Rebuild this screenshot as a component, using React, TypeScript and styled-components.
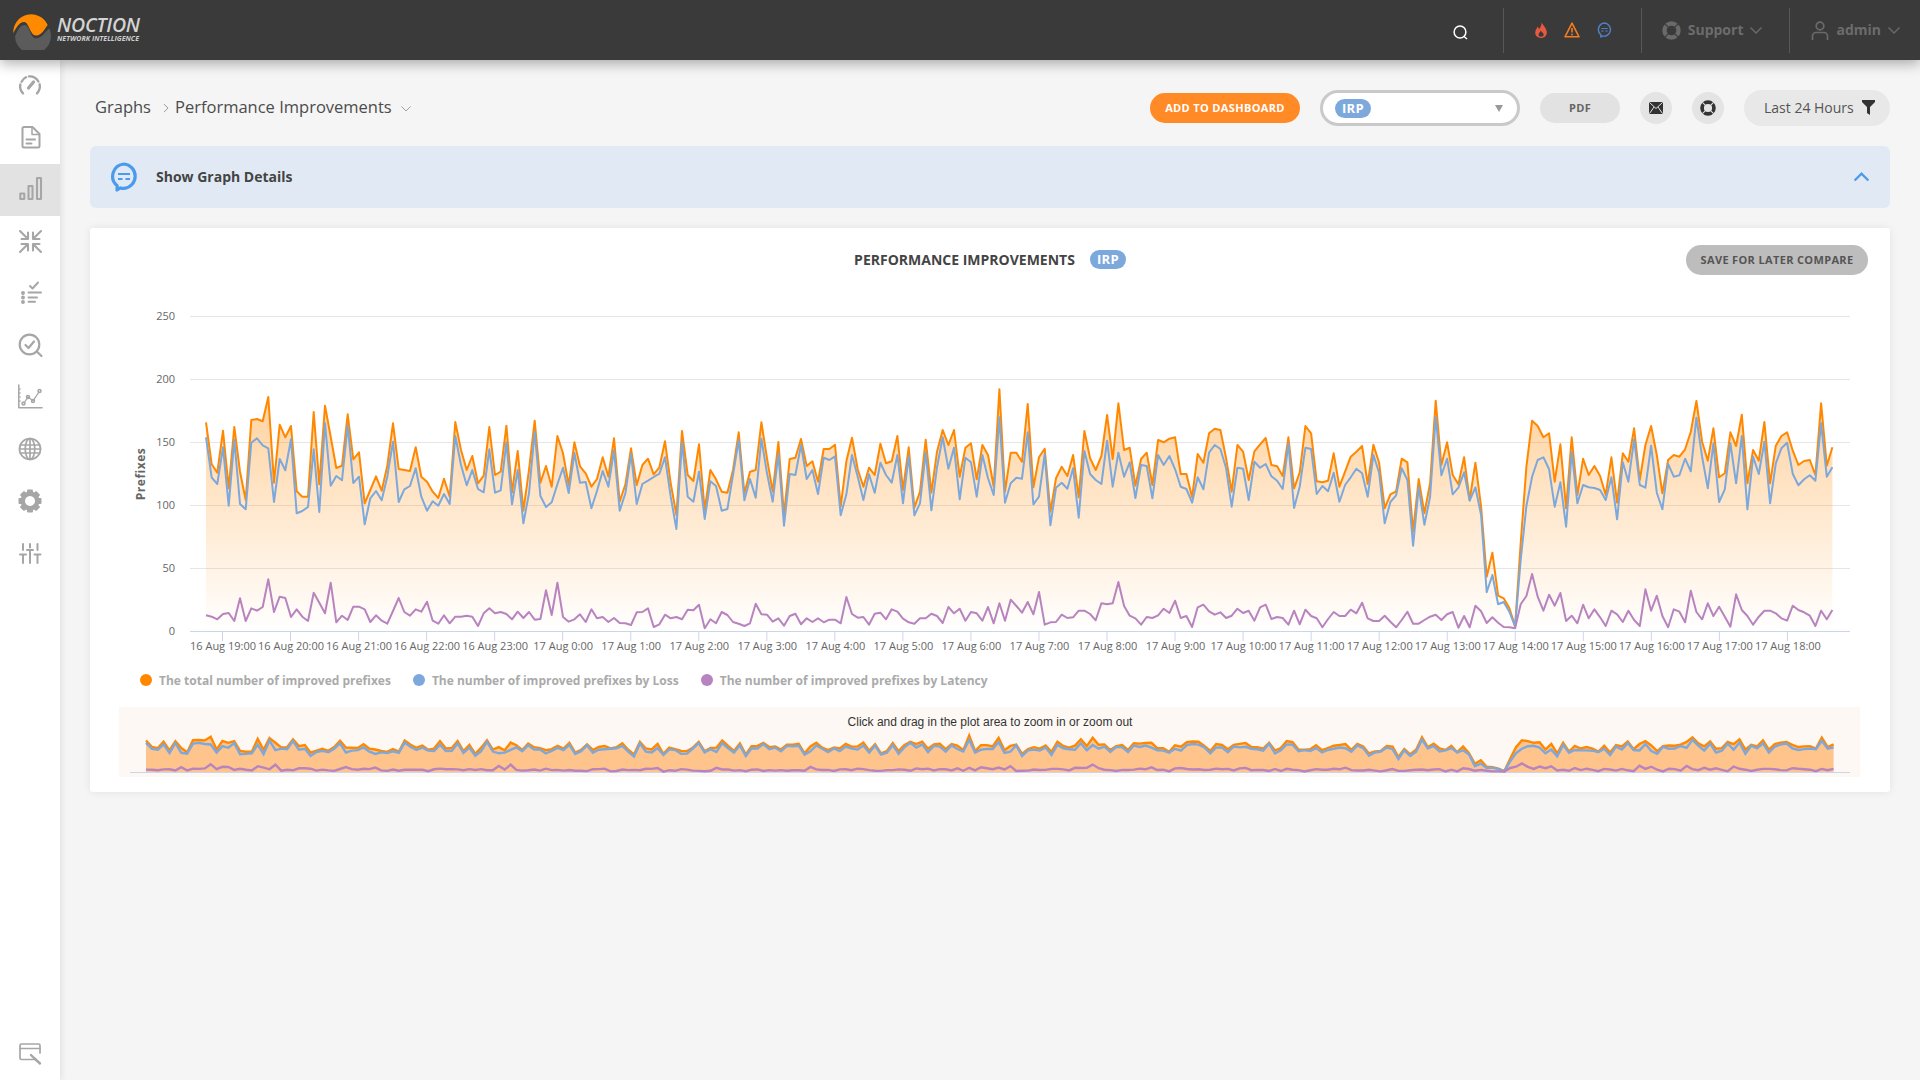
import React, { useMemo } from "react";
import styled, { createGlobalStyle } from "styled-components";

const Global = createGlobalStyle`
  html, body { margin: 0; padding: 0; height: 100%; background: #f5f5f5; }
  body { font-family: "Open Sans", "Liberation Sans", sans-serif; overflow: hidden; }
  #root { height: 100%; }
  * { box-sizing: border-box; }
`;

const Page = styled.div`
  width: 1920px; height: 1080px; display: flex; flex-direction: column; overflow: hidden;
`;
const TopBar = styled.header`
  height: 60px; flex: none; background: #3a3a3a; display: flex; align-items: center;
  box-shadow: 0 4px 12px rgba(0,0,0,.3); position: relative; z-index: 3; padding-left: 12px;
`;
const LogoWrap = styled.div`display: flex; align-items: center; gap: 5px;`;
const LogoText = styled.div`display: flex; flex-direction: column; margin-top: -3px;`;
const LogoName = styled.span`
  font: italic 600 19.5px/20px "Open Sans", sans-serif; color: #d4d4d4; letter-spacing: -.2px;
`;
const LogoTag = styled.span`
  font: italic 700 7px/7px "Open Sans", sans-serif; color: #cfcfcf; letter-spacing: .05px;
`;
const TopRight = styled.div`margin-left: auto; display: flex; align-items: center; height: 45px;`;
const TopSection = styled.div<{ $pl: number; $pr: number; $gap: number; $divider?: boolean }>`
  height: 100%; display: flex; align-items: center;
  padding: 0 ${p => p.$pr}px 0 ${p => p.$pl}px; gap: ${p => p.$gap}px;
  border-left: ${p => (p.$divider ? "1px solid #585858" : "none")};
`;
const TopLabel = styled.span`
  font-weight: 700; font-size: 14px; color: #6c6c6c; line-height: 1;
`;
const Body = styled.div`flex: 1; display: flex; min-height: 0;`;
const Sidebar = styled.nav`
  width: 60px; flex: none; background: #fff; display: flex; flex-direction: column;
  box-shadow: 2px 0 6px rgba(0,0,0,.08); position: relative; z-index: 2; padding-bottom: 1px;
`;
const SideItem = styled.div<{ $active?: boolean; $bottom?: boolean }>`
  height: 52px; flex: none; display: flex; align-items: center; justify-content: center;
  background: ${p => (p.$active ? "#e2e2e2" : "transparent")};
  margin-top: ${p => (p.$bottom ? "auto" : "0")};
`;
const Main = styled.main`flex: 1; padding: 30px 30px 0; display: flex; flex-direction: column; min-width: 0;`;
const ToolRow = styled.div`display: flex; align-items: center; height: 36px; padding-left: 5px; gap: 20px;`;
const Crumbs = styled.div`display: flex; align-items: center; margin-right: auto; margin-top: -2px;`;
const Crumb = styled.span`font-size: 16.5px; color: #4c4c4c; line-height: 1;`;
const CrumbSep = styled.span`display: flex; margin: 2px 6px 0 12px;`;
const CrumbMenu = styled.span`display: flex; margin: 3px 0 0 9px;`;
const Pill = styled.button<{ $bg: string; $fg: string; $w: number; $h?: number }>`
  width: ${p => p.$w}px; height: ${p => p.$h ?? 30}px; border: 0; border-radius: 15px; padding: 0 0 2px;
  background: ${p => p.$bg}; color: ${p => p.$fg}; font: 700 11px "Open Sans", sans-serif;
  letter-spacing: .35px; display: flex; align-items: center; justify-content: center;
`;
const SelectBox = styled.div`
  width: 200px; height: 36px; border: 3px solid #c9c9c9; border-radius: 18px; background: #fff;
  display: flex; align-items: center; padding: 0 14px 0 12px;
`;
const Badge = styled.span`
  display: inline-flex; align-items: center; justify-content: center; width: 36px; height: 19px; padding-bottom: 1px;
  border-radius: 10px; background: #7ca8dc; color: #fff; font: 700 13px "Open Sans", sans-serif; letter-spacing: .3px;
`;
const Caret = styled.span`
  margin-left: auto; width: 0; height: 0; border-left: 4.5px solid transparent; border-right: 4.5px solid transparent;
  border-top: 7px solid #999;
`;
const RoundBtn = styled.div`
  width: 32px; height: 32px; border-radius: 50%; background: #e4e4e4; display: flex; align-items: center; justify-content: center;
`;
const RangeBtn = styled.div`
  width: 146px; height: 36px; border-radius: 18px; background: #e8e8e8; display: flex; align-items: center;
  padding: 0 0 2px 20px; gap: 8px; font-size: 14px; color: #555;
`;
const DetailsBar = styled.div`
  height: 62px; margin-top: 20px; background: #e1eaf4; border-radius: 6px; display: flex; align-items: center; padding: 0 21px 0 20px;
`;
const DetailsText = styled.span`font-weight: 700; font-size: 14px; color: #444; margin: -2px 0 0 18px;`;
const DetailsChevron = styled.span`margin-left: auto; display: flex;`;
const Card = styled.section`
  margin-top: 20px; height: 564px; background: #fff; border-radius: 3px; box-shadow: 0 0 8px rgba(0,0,0,.08);
  display: flex; flex-direction: column; padding-top: 17px;
`;
const CardHead = styled.div`
  height: 30px; display: grid; grid-template-columns: 1fr auto 1fr; align-items: center; padding: 0 22px;
`;
const CardTitle = styled.div`
  grid-column: 2; display: flex; align-items: center; gap: 15px; font-weight: 700; font-size: 14px; color: #444;
  line-height: 19px; margin-top: -1px;
`;
const TitleText = styled.span`margin-top: -1px;`;
const CardSave = styled.div`grid-column: 3; justify-self: end;`;
const ChartSvg = styled.svg`display: block; width: 1800px; height: 360px; margin-top: 25px; flex: none;`;
const AxisText = styled.text`font: 400 11px "Open Sans", sans-serif; fill: #666;`;
const YTitle = styled.text`font: 700 12px "Open Sans", sans-serif; fill: #666; letter-spacing: .5px;`;
const Legend = styled.div`display: flex; align-items: center; height: 26px; margin-top: 7px; margin-bottom: 1px; padding-left: 50px; gap: 22px;`;
const LegendItem = styled.div`
  display: flex; align-items: center; gap: 7px; font-weight: 700; font-size: 12px; color: #aaa;
`;
const LegendDot = styled.span<{ $c: string }>`width: 12px; height: 12px; border-radius: 50%; background: ${p => p.$c};`;
const NavSvg = styled.svg`display: block; width: 1741px; height: 70px; margin: 13px 0 0 29px; flex: none; background: #fdf8f4;`;
const NavText = styled.text`font: 400 12px "Liberation Sans", Arial, sans-serif; fill: #333;`;

/* Chart data: pixel readings of each series, in segments [origin, orange, blue, purple]; y = origin + d / 3 */
const SEGMENTS: [number, number[], number[], number[]][] = [
  [300,
    [367,493,518,392,565,381,515,600,360,357,364,291,548,374,412,378,574,590,590,336,553,317,410,504,497,343,478,457,610,570,529,572,497,370,507,510,513,442,530,545,575,594,536,590,366,450,510,468,550,527,381,525,515,377,578,453,632,510,362,548,498,560,408,460,556,427,499,520,560,537,472,530,415,605,553],
    [412,533,552,442,617,420,612,628,428,415,436,445,606,477,511,418,640,633,621,448,636,369,557,528,541,376,549,530,673,595,573,601,530,425,606,568,558,505,590,632,604,617,582,612,408,495,556,510,567,577,448,578,571,427,613,510,670,580,395,588,621,607,553,503,579,459,548,546,625,573,513,560,451,632,580],
    [946,950,958,942,939,963,895,963,925,932,921,838,936,890,894,951,928,950,963,878,908,940,848,967,947,960,920,920,928,966,946,962,971,933,894,936,947,928,935,905,962,971,946,970,950,950,947,950,978,940,925,940,936,942,958,935,954,936,959,957,871,945,848,951,965,958,943,966,928,955,951,966,954,969,970]],
  [380,
    [205,315,255,236,283,262,184,310,405,153,285,303,193,390,270,298,335,338,270,157,340,275,270,127,235,335,186,405,237,233,177,258,244,305,207,207,194,380,243,173,268,320,263,285,191,250,244,168,330,202,383,335,179,338,215,150,195,150,290],
    [222,372,312,302,291,281,232,350,447,185,350,365,275,417,304,318,392,387,285,180,361,297,353,176,280,365,222,437,282,285,195,297,270,342,233,240,229,406,343,225,290,360,283,338,248,285,308,225,370,228,406,370,217,391,262,172,266,203,358],
    [735,697,696,685,741,733,704,715,711,718,689,691,674,745,718,730,696,705,726,731,738,730,671,703,704,725,715,737,708,701,733,715,726,715,727,719,719,730,651,702,713,711,734,701,698,718,688,695,716,727,731,715,715,701,708,729,681,700,686]],
  [380,
    [203,190,298,195,225,320,28,335,218,218,245,72,322,232,206,395,295,260,288,225,352,153,235,270,228,105,237,70,210,203,317,237,218,315,180,187,176,172,282,282,352,222,248,160,146,150,235,335,195,215,300,214,193,174,255,259,288,172,325,278],
    [233,247,350,225,295,345,112,368,310,293,296,157,373,350,222,436,323,308,326,265,413,213,282,300,312,182,320,218,290,247,354,255,258,355,225,255,228,268,320,327,368,292,328,218,195,207,265,380,263,266,360,245,263,252,289,302,327,190,384,320],
    [722,696,700,722,681,730,670,722,659,678,698,666,703,636,734,727,726,704,714,712,692,692,702,721,670,673,670,606,678,707,715,734,711,714,706,686,699,662,714,708,741,682,674,694,704,697,714,707,686,699,692,722,682,674,717,711,714,734,692,733]],
  [400,
    [78,100,244,247,242,160,260,215,170,155,138,252,134,188,325,283,274,176,187,395,237,340,250,2,195,127,225,253,172,300,188,320,530,458,587,595,625,678,430,200,62,78,112,100,245,133,325,112,285,176,225,198,228,285,172,308,160,185,85,240,135,78,165,280,180,165,170,148,95,3,125,182,85,232,220,97,138,44,250,150,182,66,250,137,108,97,152,195,183,180,225,10,197,142],
    [143,147,282,258,274,218,305,255,232,206,220,290,165,218,370,306,286,205,240,437,262,374,290,50,226,176,283,263,217,302,262,345,577,525,613,606,635,680,480,318,230,180,172,208,320,247,380,156,310,255,262,264,270,300,232,358,187,245,118,255,263,137,278,328,192,230,226,176,214,53,170,265,130,306,268,130,250,108,328,170,222,125,310,190,145,128,222,256,238,226,242,70,230,202],
    [629,648,655,682,657,636,648,648,629,640,608,655,663,663,647,665,682,660,635,671,671,660,650,644,660,643,636,683,648,682,617,634,669,652,668,681,682,685,613,588,522,590,632,584,617,579,663,647,670,614,655,628,652,678,632,643,666,632,660,678,568,632,587,648,682,628,635,667,572,636,658,610,648,620,650,680,583,630,648,674,650,632,632,640,655,662,617,630,637,647,678,632,658,630]],
];

function buildSeries(idx: 1 | 2 | 3): number[] {
  const out: number[] = [];
  SEGMENTS.forEach(seg => seg[idx].forEach(d => out.push(seg[0] + d / 3)));
  return out;
}

const X0 = 206;
const DX = 5.667;
const BASE = 631;
const NAV_X0 = 146;
const NAV_DX = 5.88;
const NAV_BASE = 772;
const NAV_K = 0.19 / 1.26;
const GRID = [[250, 316], [200, 379], [150, 442], [100, 505], [50, 568], [0, 631]];
const HOURS = [19,20,21,22,23,0,1,2,3,4,5,6,7,8,9,10,11,12,13,14,15,16,17,18];

const mainPts = (ys: number[]) => ys.map((y, i) => `${(X0 + DX * i).toFixed(1)},${y.toFixed(1)}`).join(" ");
const navPts = (ys: number[]) =>
  ys.map((y, i) => `${(NAV_X0 + NAV_DX * i).toFixed(1)},${(NAV_BASE - (BASE - y) * NAV_K).toFixed(1)}`).join(" ");

const ORANGE = "#ff8800";
const BLUE = "#7ca8dc";
const PURPLE = "#b884bf";
const SIDE = "#a6a6a6";

const Chart: React.FC = () => {
  const s = useMemo(() => ({ o: buildSeries(1), b: buildSeries(2), p: buildSeries(3) }), []);
  const end = X0 + DX * (s.o.length - 1);
  return (
    <ChartSvg viewBox="90 300 1800 360">
      <defs>
        <linearGradient id="areaFill" gradientUnits="userSpaceOnUse" x1="0" y1="389" x2="0" y2="631">
          <stop offset="0" stopColor={ORANGE} stopOpacity=".39" />
          <stop offset="1" stopColor={ORANGE} stopOpacity="0" />
        </linearGradient>
      </defs>
      {GRID.slice(0, 5).map(([v, y]) => <line key={v} x1="190" x2="1850" y1={y + .5} y2={y + .5} stroke="#e6e6e6" />)}
      <line x1="190" x2="1850" y1="631.5" y2="631.5" stroke="#ccd6eb" />
      {HOURS.map((h, i) => {
        const x = 222.5 + 68.04 * i;
        return (
          <g key={i}>
            <line x1={x} x2={x} y1="631" y2="641" stroke="#ccd6eb" />
            <AxisText x={x + .5} y="650" textAnchor="middle">{`${i < 5 ? 16 : 17} Aug ${h}:00`}</AxisText>
          </g>
        );
      })}
      {GRID.map(([v, y]) => <AxisText key={v} x="175" y={y + 4} textAnchor="end">{v}</AxisText>)}
      <YTitle x="145" y="474" textAnchor="middle" transform="rotate(-90 145 474)">Prefixes</YTitle>
      <polygon points={`${X0},${BASE} ${mainPts(s.o)} ${end},${BASE}`} fill="url(#areaFill)" />
      <polyline points={mainPts(s.o)} fill="none" stroke={ORANGE} strokeWidth="2" strokeLinejoin="round" />
      <polyline points={mainPts(s.b)} fill="none" stroke={BLUE} strokeWidth="2" strokeLinejoin="round" />
      <polyline points={mainPts(s.p)} fill="none" stroke={PURPLE} strokeWidth="2" strokeLinejoin="round" />
    </ChartSvg>
  );
};

const Navigator: React.FC = () => {
  const s = useMemo(() => ({ o: buildSeries(1), b: buildSeries(2), p: buildSeries(3) }), []);
  const end = NAV_X0 + NAV_DX * (s.o.length - 1);
  return (
    <NavSvg viewBox="119 707 1741 70">
      <line x1="130" x2="1850" y1="772.5" y2="772.5" stroke="#ccd6eb" />
      <polygon points={`${NAV_X0},${NAV_BASE} ${navPts(s.o)} ${end},${NAV_BASE}`} fill="#fec48c" />
      <polyline points={navPts(s.o)} fill="none" stroke={ORANGE} strokeWidth="2.4" />
      <polyline points={navPts(s.b)} fill="none" stroke={BLUE} strokeWidth="2.4" />
      <polyline points={navPts(s.p)} fill="none" stroke={PURPLE} strokeWidth="2.4" />
      <NavText x="990" y="726" textAnchor="middle">Click and drag in the plot area to zoom in or zoom out</NavText>
    </NavSvg>
  );
};

const Ico: React.FC<{ children: React.ReactNode; dy?: number; sw?: number }> = ({ children, dy = 0, sw = 2 }) => (
  <svg width={24} height={24} viewBox={`0 ${-dy} 24 24`} fill="none" stroke={SIDE} strokeWidth={sw} strokeLinecap="round" strokeLinejoin="round" style={{ overflow: "visible" }}>
    {children}
  </svg>
);

const Logo = () => (
  <svg width="40" height="40" viewBox="0 0 40 40">
    <path d="M3 26.700 C6 20 8 15 12.500 15 C18 15 18 28.300 24 28.300 C30 28.300 33 22 37.300 18.300 A18 18 0 1 1 3 26.700Z" fill="#5b5b5b" />
    <path d="M1.300 23.300 A18 18 0 0 1 35.700 15 C33 18 30 25.500 24 25.500 C18 25.500 17 12 12.200 12 C7 12 4 18 1.300 23.300Z" fill="#ff8a00" />
  </svg>
);

const SIDE_ICONS: React.ReactNode[] = [
  <Ico key="g" sw={2.400} dy={1.500}><path d="M5 17.800 A10 10 0 0 1 2.300 9" /><path d="M3.600 6.200 A10 10 0 0 1 8 1.800" /><path d="M11 .9 A10 10 0 0 1 20.400 6" /><path d="M21.600 8.800 A10 10 0 0 1 19 17.800" /><path d="M10.500 12.500 L15.500 6.500" strokeWidth="3.200" /></Ico>,
  <Ico key="f"><path d="M6 1 H14.500 L21.500 8 V20 A1.500 1.500 0 0 1 20 21.500 H6 A1.500 1.500 0 0 1 4.500 20 V2.500 A1.500 1.500 0 0 1 6 1Z" /><path d="M14 1.500 V8.500 H21" strokeWidth="1.500" /><path d="M8.500 13.500 H17" /><path d="M8.500 17.500 H13.500" /></Ico>,
  <Ico key="b" sw={2.100}><rect x="2.300" y="15.500" width="4" height="5.500" rx=".3" /><rect x="10.500" y="8" width="4" height="13" rx=".3" /><rect x="19" y="0" width="4" height="21" rx=".3" /></Ico>,
  <Ico key="c" sw={2.100} dy={-1}><path d="M2 2 L10 10 M10 3.500 V10 H3.500" /><path d="M23 2 L15 10 M15 3.500 V10 H21.500" /><path d="M2 23 L10 15 M10 21.500 V15 H3.500" /><path d="M23 23 L15 15 M15 21.500 V15 H21.500" /></Ico>,
  <Ico key="l" sw={1.900} dy={-1}><path d="M12 5 L14.500 7.500 L20 1.500" /><path d="M10.500 11.500 H23" /><path d="M10.500 16.500 H19" /><path d="M10.500 20.700 H17" /><circle cx="5" cy="12" r="1" fill={SIDE} /><circle cx="5" cy="16.500" r="1" fill={SIDE} /><circle cx="5" cy="21" r="1" fill={SIDE} /></Ico>,
  <Ico key="s" sw={2.200} dy={-.5}><circle cx="11.500" cy="11" r="9.800" /><path d="M18.800 18 L23.500 22.500" /><path d="M7.500 11.500 L10.500 14.500 L16 8" /></Ico>,
  <Ico key="t" sw={1.500} dy={-1}><path d="M.8 0 V22.800 H24" /><path d="M.8 4 H2.500 M.8 8 H2.500 M.8 12 H2.500 M.8 16 H2.500" strokeWidth="1" /><path d="M6 18 L10 12 L15 15.800 L21 7" strokeWidth="1.300" /><circle cx="5.500" cy="18.500" r="1.500" /><circle cx="10" cy="12" r="1.500" /><circle cx="15" cy="16" r="1.500" /><circle cx="21.500" cy="6" r="1.500" /></Ico>,
  <Ico key="w" sw={1.700} dy={-1}><circle cx="12" cy="12" r="10.500" /><ellipse cx="12" cy="12" rx="4.800" ry="10.500" /><path d="M12 1.500 V22.500 M2.200 8 H21.800 M2.200 16 H21.800 M1.500 12 H22.500" /></Ico>,
  <Ico key="e" sw={0} dy={-1}>
    <g fill={SIDE} stroke="none">
      {[0, 45, 90, 135, 180, 225, 270, 315].map(a => <rect key={a} x="9" y=".5" width="6" height="5" rx="1" transform={`rotate(${a} 12 12)`} />)}
      <path fillRule="evenodd" d="M12 2.500 A9.500 9.500 0 1 1 11.990 2.500Z M12 7 A5 5 0 1 0 12.010 7Z" />
    </g>
  </Ico>,
  <Ico key="v" dy={-2}><path d="M5 4 V10 M2 14.500 H8 M5 14.500 V23" /><path d="M12 4 V7.500 M9 10 H15 M12 10 V23" /><path d="M19.500 4 V10 M16.500 14.500 H22.500 M19.500 14.500 V23" /></Ico>,
];

const FireIcon = () => (
  <svg width="12" height="16" viewBox="0 0 12 16"><path fill="#e8593f" fillRule="evenodd" d="M6.500 0 C7.500 3 11.800 6 11.800 10.500 C11.800 13.800 9.200 16 6 16 C2.700 16 .2 13.800 .2 10.800 C.2 8 1.900 6.500 2.700 4.500 C3.500 5.500 3.800 6.500 3.900 7.200 C5.500 5.500 7 3 6.500 0Z M5.800 8.500 C5.500 10 3.500 11 3.500 12.800 C3.500 14 4.600 14.800 6 14.800 C7.600 14.800 8.700 14 8.700 12.600 C8.700 11 6.500 10.200 5.800 8.500Z" /></svg>
);
const WarnIcon = () => (
  <svg width="16" height="16" viewBox="0 0 16 16" fill="none"><path d="M8 1.200 L15 14.800 H1 Z" stroke="#f47b20" strokeWidth="1.600" strokeLinejoin="round" /><path d="M8 6 V10.500" stroke="#f47b20" strokeWidth="1.600" /><circle cx="8" cy="12.500" r=".9" fill="#f47b20" /></svg>
);
const ChatBubble: React.FC<{ size: number; c: string; sw: number }> = ({ size, c, sw }) => (
  <svg width={size} height={size * 1.07} viewBox="0 0 28 30" fill="none">
    <path d="M14 2 A12.300 12.300 0 0 1 14 26.500 C12.500 26.500 11.500 26.300 10.500 26 L7 28 L7.200 23.800 A12.300 12.300 0 0 1 14 2Z" stroke={c} strokeWidth={sw} strokeLinejoin="round" />
    <path d="M8 12 H20 M8 17 H12.500 M15.500 17 H20" stroke={c} strokeWidth={sw * .68} />
  </svg>
);
const LifeRing: React.FC<{ size: number; c: string; gap: string }> = ({ size, c, gap }) => (
  <svg width={size} height={size} viewBox="0 0 20 20">
    <circle cx="10" cy="10" r="7.400" fill="none" stroke={c} strokeWidth="4.600" />
    <path d="M3 3 L6.500 6.500 M17 3 L13.500 6.500 M3 17 L6.500 13.500 M17 17 L13.500 13.500" stroke={gap} strokeWidth="1.300" />
  </svg>
);
const Chevron: React.FC<{ w: number; c: string; up?: boolean; right?: boolean; sw?: number }> = ({ w, c, up, right, sw = 1.400 }) => (
  <svg width={w} height={right ? w * 1.7 : w * .55} viewBox={right ? "0 0 6 10" : "0 0 12 6.600"} fill="none" style={{ overflow: "visible" }}>
    <path d={right ? "M1 1 L5 5 L1 9" : up ? "M.5 6 L6 .5 L11.500 6" : "M.5 .5 L6 6 L11.500 .5"} stroke={c} strokeWidth={sw} />
  </svg>
);

export default function App() {
  return (
    <Page>
      <Global />
      <TopBar>
        <LogoWrap>
          <Logo />
          <LogoText>
            <LogoName>NOCTION</LogoName>
            <LogoTag>NETWORK INTELLIGENCE</LogoTag>
          </LogoText>
        </LogoWrap>
        <TopRight>
          <TopSection $pl={0} $pr={35} $gap={0}>
            <svg width="15" height="15" viewBox="0 0 15 15" fill="none" style={{ marginTop: 4 }}><circle cx="7" cy="7" r="5.900" stroke="#fff" strokeWidth="1.500" /><path d="M11 11.500 L14 14" stroke="#fff" strokeWidth="1.500" /></svg>
          </TopSection>
          <TopSection $divider $pl={31} $pr={29} $gap={17}>
            <FireIcon />
            <WarnIcon />
            <ChatBubble size={15} c="#4f7fc4" sw={2.800} />
          </TopSection>
          <TopSection $divider $pl={20} $pr={27} $gap={7}>
            <LifeRing size={19} c="#6a6a6a" gap="#3a3a3a" />
            <TopLabel>Support</TopLabel>
            <Chevron w={12} c="#6a6a6a" />
          </TopSection>
          <TopSection $divider $pl={21} $pr={20} $gap={7}>
            <svg width="18" height="19" viewBox="0 0 18 19" fill="none"><circle cx="9" cy="5" r="3.800" stroke="#6a6a6a" strokeWidth="1.700" /><path d="M1.500 19 V15 A3.500 3.500 0 0 1 5 11.500 H13 A3.500 3.500 0 0 1 16.500 15 V19" stroke="#6a6a6a" strokeWidth="1.700" /></svg>
            <TopLabel>admin</TopLabel>
            <Chevron w={12} c="#6a6a6a" />
          </TopSection>
        </TopRight>
      </TopBar>
      <Body>
        <Sidebar>
          {SIDE_ICONS.map((icon, i) => <SideItem key={i} $active={i === 2}>{icon}</SideItem>)}
          <SideItem $bottom>
            <Ico sw={1.700} dy={1}>
              <path d="M18 17.500 H3.500 A1.500 1.500 0 0 1 2 16 V3.500 A1.500 1.500 0 0 1 3.500 2 H20.500 A1.500 1.500 0 0 1 22 3.500 V11" />
              <path d="M2 6.500 H22" />
              <path d="M13 13 L16 16 L22 21.500" strokeWidth="2.400" />
            </Ico>
          </SideItem>
        </Sidebar>
        <Main>
          <ToolRow>
            <Crumbs>
              <Crumb>Graphs</Crumb>
              <CrumbSep><Chevron right w={6} c="#999" sw={1} /></CrumbSep>
              <Crumb>Performance Improvements</Crumb>
              <CrumbMenu><Chevron w={10} c="#999" sw={1.100} /></CrumbMenu>
            </Crumbs>
            <Pill $bg="#ff8a26" $fg="#fff" $w={150}>ADD TO DASHBOARD</Pill>
            <SelectBox><Badge>IRP</Badge><Caret /></SelectBox>
            <Pill $bg="#e2e2e2" $fg="#666" $w={80}>PDF</Pill>
            <RoundBtn>
              <svg width="14" height="12" viewBox="0 0 14 12"><rect width="14" height="12" rx="1" fill="#333" /><path d="M.5 .5 L7 6.500 L13.500 .5 M.5 11.500 L5 5 M13.500 11.500 L9 5" stroke="#e4e4e4" strokeWidth="1" fill="none" /></svg>
            </RoundBtn>
            <RoundBtn><LifeRing size={16} c="#333" gap="#e4e4e4" /></RoundBtn>
            <RangeBtn>
              Last 24 Hours
              <svg width="13" height="15" viewBox="0 0 13 15"><path d="M0 0 H13 V2 L8 7 V15 L5 13 V7 L0 2Z" fill="#333" /></svg>
            </RangeBtn>
          </ToolRow>
          <DetailsBar>
            <ChatBubble size={28} c="#4a9bec" sw={3.200} />
            <DetailsText>Show Graph Details</DetailsText>
            <DetailsChevron><Chevron up w={15} c="#4a9bec" sw={1.800} /></DetailsChevron>
          </DetailsBar>
          <Card>
            <CardHead>
              <CardTitle><TitleText>PERFORMANCE IMPROVEMENTS</TitleText> <Badge>IRP</Badge></CardTitle>
              <CardSave><Pill $bg="#bdbdbd" $fg="#555" $w={182}>SAVE FOR LATER COMPARE</Pill></CardSave>
            </CardHead>
            <Chart />
            <Legend>
              <LegendItem><LegendDot $c={ORANGE} />The total number of improved prefixes</LegendItem>
              <LegendItem><LegendDot $c={BLUE} />The number of improved prefixes by Loss</LegendItem>
              <LegendItem><LegendDot $c={PURPLE} />The number of improved prefixes by Latency</LegendItem>
            </Legend>
            <Navigator />
          </Card>
        </Main>
      </Body>
    </Page>
  );
}
